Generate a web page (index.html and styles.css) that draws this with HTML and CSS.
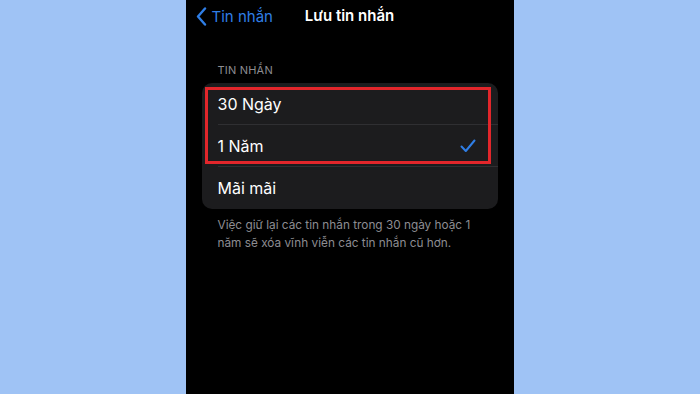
FILE: index.html
```html
<!DOCTYPE html>
<html lang="vi">
<head>
<meta charset="utf-8">
<link rel="stylesheet" href="styles.css">
</head>
<body>
<div class="stage">
  <div class="phone">
    <div class="nav">
      <div class="back">
        <svg class="chev" width="11" height="19" viewBox="0 0 11 19"><path d="M9 1.5 L2 9.5 L9 17.5" fill="none" stroke="#2f7ee6" stroke-width="2.4" stroke-linecap="round" stroke-linejoin="round"/></svg>
        <span>Tin nhắn</span>
      </div>
      <div class="title">Lưu tin nhắn</div>
    </div>
    <div class="section-head">TIN NHẮN</div>
    <div class="card">
      <div class="highlight"></div>
      <div class="row"><span>30 Ngày</span></div>
      <div class="row"><span>1 Năm</span>
        <svg class="check" width="16" height="14" viewBox="0 0 16 14"><path d="M1.5 7.5 L5.8 12 L14.5 1.5" fill="none" stroke="#2f7ee6" stroke-width="2" stroke-linecap="round" stroke-linejoin="round"/></svg>
      </div>
      <div class="row last"><span>Mãi mãi</span></div>
    </div>
    <p class="foot">Việc giữ lại các tin nhắn trong 30 ngày hoặc 1 năm sẽ xóa vĩnh viễn các tin nhắn cũ hơn.</p>
  </div>
</div>
</body>
</html>
```
FILE: styles.css
```css
html, body {
  margin: 0;
  padding: 0;
  height: 100%;
}
body {
  background: #9fc3f5;
  font-family: Inter, "Noto Sans", "Liberation Sans", sans-serif;
  overflow: hidden;
}
.stage {
  display: flex;
  justify-content: center;
  height: 394px;
}
.phone {
  width: 328px;
  height: 394px;
  margin-left: -1px;
  background: #000;
  box-sizing: border-box;
  padding: 0 16px;
  display: flex;
  flex-direction: column;
}
.nav {
  position: relative;
  height: 33px;
  display: flex;
  align-items: center;
}
.back {
  display: flex;
  align-items: center;
  gap: 5px;
  margin-left: -6px;
  color: #2f7ee6;
  font-size: 15px;
  margin-top: -1px;
}
.title {
  position: absolute;
  left: 0;
  right: 0;
  top: 0;
  height: 31px;
  display: flex;
  align-items: center;
  justify-content: center;
  color: #fff;
  font-size: 15px;
  font-weight: 600;
  pointer-events: none;
}
.section-head {
  margin-top: 29px;
  padding-left: 16px;
  color: #8d8d92;
  font-size: 11px;
  letter-spacing: 0.2px;
  height: 16px;
  line-height: 16px;
}
.card {
  position: relative;
  margin-top: 5px;
  background: #1c1c1e;
  border-radius: 10px;
  display: flex;
  flex-direction: column;
}
.row {
  height: 42px;
  display: flex;
  align-items: center;
  justify-content: space-between;
  margin-left: 16px;
  padding-right: 22px;
  border-bottom: 1px solid #2f2f32;
  box-sizing: border-box;
  color: #fff;
  font-size: 16px;
}
.row.last {
  border-bottom: none;
}
.highlight {
  position: absolute;
  left: 3px;
  top: 4px;
  width: 286px;
  height: 77px;
  border: 3px solid #e2262b;
  box-sizing: border-box;
  pointer-events: none;
}
.check {
  display: block;
}
.foot {
  margin: 8px 0 0 16px;
  padding-right: 8px;
  color: #8d8d92;
  font-size: 11.8px;
  line-height: 17.5px;
}
```
